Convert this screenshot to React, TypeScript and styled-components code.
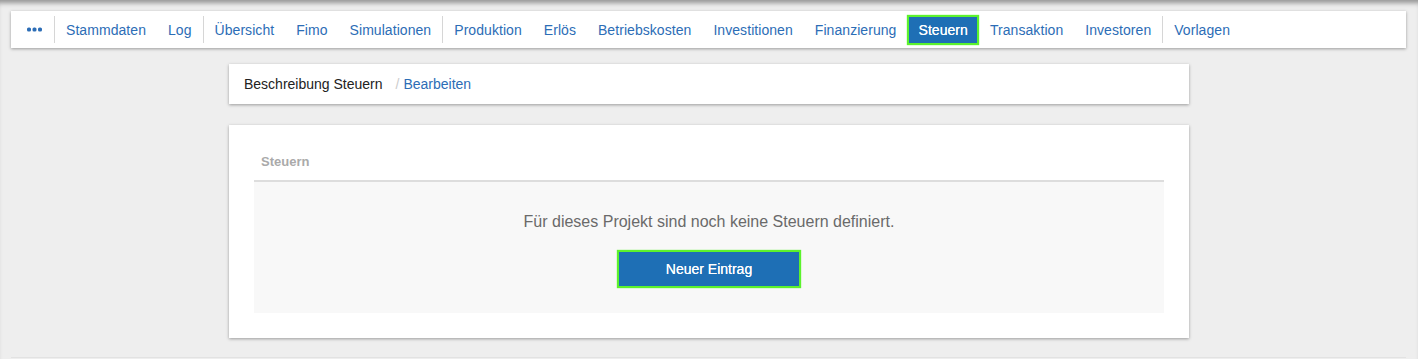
import React from "react";
import styled, { createGlobalStyle, css } from "styled-components";

const GlobalStyle = createGlobalStyle`
  html, body {
    margin: 0;
    padding: 0;
    background: #eeeeee;
    font-family: "Liberation Sans", Arial, Helvetica, sans-serif;
  }
  * { box-sizing: border-box; }
`;

const Page = styled.div`
  min-height: 359px;
  padding-top: 11px;
  background: #eeeeee;
  box-shadow: inset 0 6px 5px -3px rgba(0, 0, 0, 0.38);
  overflow: hidden;
`;

const NavBar = styled.nav`
  display: flex;
  align-items: center;
  height: 37px;
  margin: 0 12px 0 11px;
  padding: 0 4px;
  background: #ffffff;
  box-shadow: 0 1px 3px rgba(0, 0, 0, 0.35);
`;

const NavItem = styled.a<{ $active?: boolean; $wide?: boolean }>`
  display: flex;
  align-items: center;
  height: 30px;
  padding: 0 ${(p) => (p.$wide ? "12px" : "11px")};
  font-size: 14px;
  letter-spacing: 0.06px;
  color: #2c6db6;
  text-decoration: none;
  white-space: nowrap;
  cursor: pointer;
  ${(p) =>
    p.$active &&
    css`
      background: #1e6fb5;
      color: #ffffff;
      box-shadow: inset 0 0 0 2px #5cf22c, 0 0 1px #5cf22c;
      text-shadow: 0 0 0.4px #ffffff;
    `}
`;

const NavDivider = styled.span`
  width: 1px;
  height: 27px;
  background: #d6d6d6;
  flex: none;
`;

const Container = styled.div`
  width: 960px;
  margin: 0 auto;
`;

const Breadcrumb = styled.div`
  display: flex;
  align-items: center;
  height: 40px;
  margin-top: 16px;
  padding: 0 15px;
  background: #ffffff;
  box-shadow: 0 1px 3px rgba(0, 0, 0, 0.35);
  font-size: 14px;
  color: #222222;
`;

const CrumbSep = styled.span`
  margin-left: 8px;
  padding: 0 4px 0 5px;
  color: #cccccc;
`;

const CrumbLink = styled.a`
  color: #2c6db6;
  text-decoration: none;
`;

const Panel = styled.section`
  margin-top: 21px;
  padding: 25px;
  background: #ffffff;
  box-shadow: 0 1px 3px rgba(0, 0, 0, 0.35);
`;

const PanelHeader = styled.div`
  height: 30px;
  padding: 0 7px;
  line-height: 24px;
  font-size: 13px;
  font-weight: bold;
  color: #aaaaaa;
  border-bottom: 2px solid #dddddd;
  box-sizing: content-box;
`;

const EmptyState = styled.div`
  display: flex;
  flex-direction: column;
  align-items: center;
  padding: 30px 0 25px;
  background: #f8f8f8;
`;

const EmptyText = styled.p`
  margin: 0;
  font-size: 16px;
  line-height: 19px;
  color: #6a6a6a;
`;

const PrimaryButton = styled.button`
  margin-top: 19px;
  width: 184px;
  height: 38px;
  border: none;
  background: #1e6fb5;
  color: #ffffff;
  font-family: inherit;
  font-size: 14px;
  box-shadow: inset 0 0 0 2px #5cf22c, 0 0 1px #5cf22c;
  text-shadow: 0 0 0.4px #ffffff;
  cursor: pointer;
`;

const Footer = styled.div`
  margin: 19px 12px 0 11px;
  height: 4px;
  border-top: 1px solid #e2e2e2;
`;

const Dots = () => (
  <svg width="15" height="5" viewBox="0 0 15 5" aria-hidden="true">
    <rect x="0" y="0.5" width="4" height="4" rx="1.6" fill="#2c6db6" />
    <rect x="5.5" y="0.5" width="4" height="4" rx="1.6" fill="#2c6db6" />
    <rect x="11" y="0.5" width="4" height="4" rx="1.6" fill="#2c6db6" />
  </svg>
);

type NavEntry = { label: string; active?: boolean } | "divider";

const navEntries: NavEntry[] = [
  { label: "Stammdaten" },
  { label: "Log" },
  "divider",
  { label: "Übersicht" },
  { label: "Fimo" },
  { label: "Simulationen" },
  "divider",
  { label: "Produktion" },
  { label: "Erlös" },
  { label: "Betriebskosten" },
  { label: "Investitionen" },
  { label: "Finanzierung" },
  { label: "Steuern", active: true },
  { label: "Transaktion" },
  { label: "Investoren" },
  "divider",
  { label: "Vorlagen" },
];

export default function App() {
  return (
    <>
      <GlobalStyle />
      <Page>
        <NavBar>
          <NavItem aria-label="Mehr" $wide>
            <Dots />
          </NavItem>
          <NavDivider />
          {navEntries.map((e, i) =>
            e === "divider" ? (
              <NavDivider key={i} />
            ) : (
              <NavItem key={i} $active={e.active}>
                {e.label}
              </NavItem>
            )
          )}
        </NavBar>
        <Container>
          <Breadcrumb>
            <span>Beschreibung Steuern</span>
            <CrumbSep>/</CrumbSep>
            <CrumbLink>Bearbeiten</CrumbLink>
          </Breadcrumb>
          <Panel>
            <PanelHeader>Steuern</PanelHeader>
            <EmptyState>
              <EmptyText>Für dieses Projekt sind noch keine Steuern definiert.</EmptyText>
              <PrimaryButton>Neuer Eintrag</PrimaryButton>
            </EmptyState>
          </Panel>
        </Container>
        <Footer />
      </Page>
    </>
  );
}
